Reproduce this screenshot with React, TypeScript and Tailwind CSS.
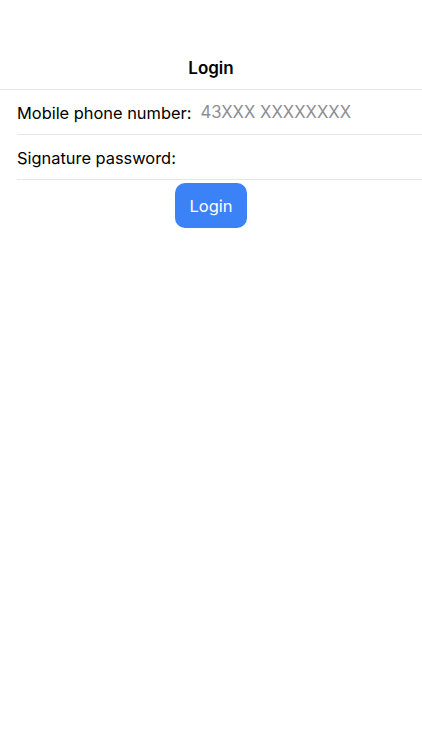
import React from "react";

export default function App() {
  return (
    <div className="min-h-[750px] w-[422px] bg-white text-black" style={{ fontFamily: "Inter, 'Noto Sans', sans-serif" }}>
      <div className="h-[46px]" />
      <div className="flex h-[44px] items-center justify-center border-b border-[#e5e5ea] pt-[3px]">
        <span className="text-[17px] font-semibold">Login</span>
      </div>
      <div className="pl-[17px]">
        <div className="flex h-[45px] items-center border-b border-[#e5e5ea] pt-[2px]">
          <span className="text-[16.4px]">Mobile phone number:</span>
          <span className="ml-[9px] text-[16.7px] text-[#8e8e93]">43XXX XXXXXXXX</span>
        </div>
        <div className="flex h-[45px] items-center border-b border-[#e5e5ea] pt-[2px]">
          <span className="text-[16.4px]">Signature password:</span>
        </div>
      </div>
      <div className="mt-[3px] flex justify-center">
        <button className="h-[45px] w-[72px] rounded-[10px] bg-[#3b82f6] pt-[2px] text-[16.5px] text-white">Login</button>
      </div>
    </div>
  );
}
